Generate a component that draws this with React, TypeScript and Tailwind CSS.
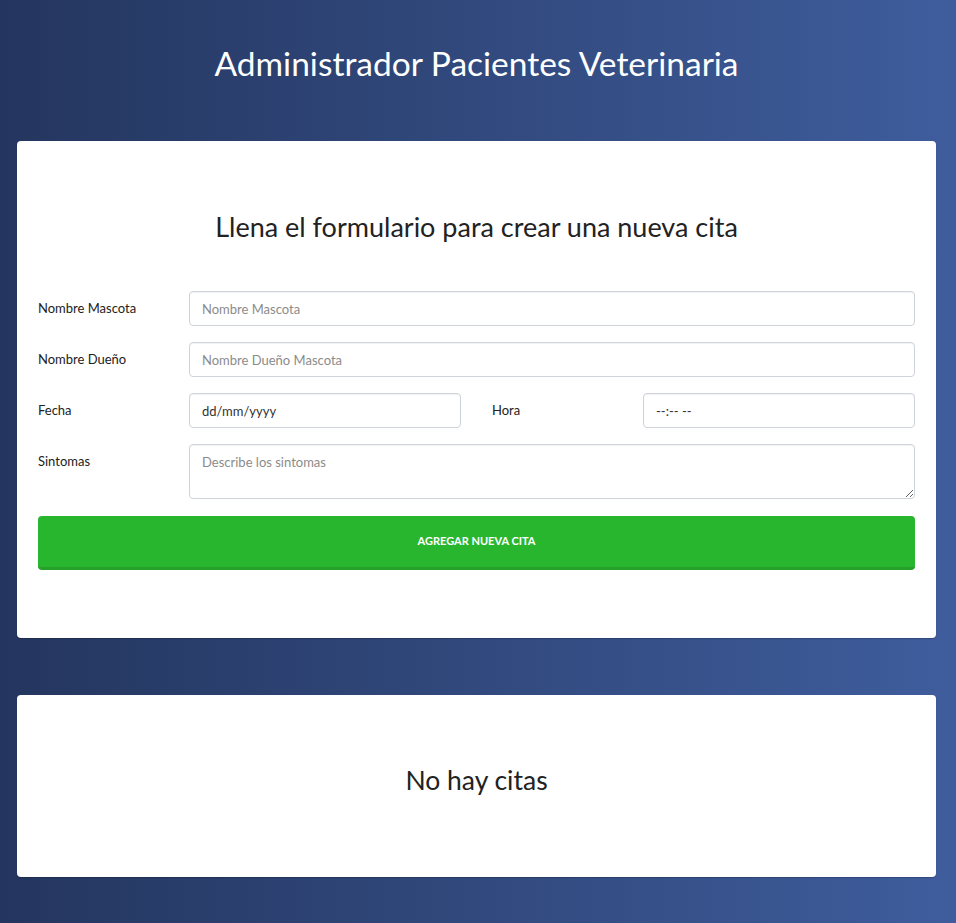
const font = { fontFamily: '"Lato", "Open Sans", sans-serif' };

function Field({ label, children }: { label: string; children: React.ReactNode }) {
  return (
    <div className="flex items-start">
      <div className="w-[151px] h-[35px] flex items-center text-[13px] text-[#222]">{label}</div>
      <div className="flex-1">{children}</div>
    </div>
  );
}

const inputCls =
  "w-full h-[35px] rounded-[4px] border border-[#cfd3da] px-3 text-[13px] text-[#333] placeholder:text-[#8b8b8b] outline-none shadow-[inset_0_1px_1px_rgba(0,0,0,0.06)]";

export default function App() {
  return (
    <div className="min-h-screen bg-linear-to-r from-[#24365f] to-[#3f5d9d] pl-[17px] pr-[20px] pb-[46px]" style={font}>
      <h1 className="pt-[40px] mb-[55px] text-center text-[33.5px] leading-[46px] text-white">
        Administrador Pacientes Veterinaria
      </h1>

      <div className="bg-white rounded-[4px] shadow-[0_1px_1px_rgba(0,0,0,0.2)] px-[21px] py-[68px]">
        <h2 className="text-center text-[27px] leading-[36px] text-[#222] mb-[46px]">
          Llena el formulario para crear una nueva cita
        </h2>
        <form className="flex flex-col gap-[16px]">
          <Field label="Nombre Mascota">
            <input type="text" placeholder="Nombre Mascota" className={inputCls} />
          </Field>
          <Field label="Nombre Dueño">
            <input type="text" placeholder="Nombre Dueño Mascota" className={inputCls} />
          </Field>
          <div className="grid grid-cols-2 gap-[31px]">
            <Field label="Fecha">
              <input type="text" defaultValue="dd/mm/yyyy" className={inputCls} />
            </Field>
            <Field label="Hora">
              <input type="text" defaultValue="--:-- --" className={inputCls} />
            </Field>
          </div>
          <Field label="Sintomas">
            <textarea
              placeholder="Describe los sintomas"
              className="block w-full h-[55px] rounded-[4px] border border-[#cfd3da] px-3 py-[8px] text-[13px] text-[#333] placeholder:text-[#8b8b8b] outline-none shadow-[inset_0_1px_1px_rgba(0,0,0,0.06)]"
            />
          </Field>
          <button
            type="button"
            className="mt-[1px] h-[54px] w-full rounded-[4px] bg-[#29b62f] border-b-[3px] border-[#25a02a] text-white text-[11px] font-bold uppercase"
          >
            Agregar Nueva Cita
          </button>
        </form>
      </div>

      <div className="mt-[57px] bg-white rounded-[4px] shadow-[0_1px_1px_rgba(0,0,0,0.2)] h-[182px] pt-[67px]">
        <h2 className="text-center text-[26.5px] leading-[36px] text-[#222]">No hay citas</h2>
      </div>
    </div>
  );
}
